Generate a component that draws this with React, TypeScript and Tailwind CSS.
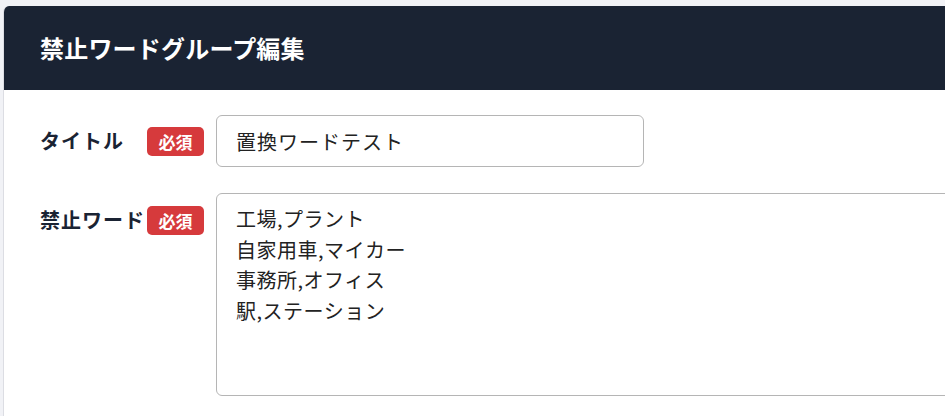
import React from "react";

const font = { fontFamily: '"Noto Sans CJK JP", "Noto Sans", sans-serif' };

function Badge() {
  return (
    <span className="flex h-[29px] w-[57px] shrink-0 items-center justify-center rounded-[5px] bg-[#d63a3c] text-[17px] font-bold leading-none text-white">
      必須
    </span>
  );
}

export default function App() {
  return (
    <div
      className="h-[416px] w-[945px] overflow-hidden bg-[#f1f2f6] pl-[3px] pt-[6px]"
      style={font}
    >
      <div className="h-[420px] w-[1000px] overflow-hidden rounded-tl-[6px] border-l border-[#dcdde3] bg-white">
        <div className="flex h-[84px] items-center bg-[#1a2333] pl-[36px]">
          <h1 className="text-[24px] font-bold leading-none tracking-[0.2px] text-white">
            禁止ワードグループ編集
          </h1>
        </div>
        <div className="flex flex-col gap-[26px] pl-[36px] pt-[25px]">
          <div className="flex items-center">
            <div className="flex w-[176px] items-center">
              <span className="w-[107px] text-[20px] font-bold tracking-[1px] text-[#1a2333]">
                タイトル
              </span>
              <Badge />
            </div>
            <input
              readOnly
              value="置換ワードテスト"
              className="h-[52px] w-[428px] rounded-[6px] border border-[#b5b5b5] px-[19px] text-[20px] tracking-[1px] text-[#222] outline-none"
              style={font}
            />
          </div>
          <div className="flex items-start">
            <div className="flex w-[176px] items-center pt-[12px]">
              <span className="w-[107px] text-[20px] font-bold tracking-[1px] text-[#1a2333]">
                禁止ワード
              </span>
              <Badge />
            </div>
            <textarea
              readOnly
              value={"工場,プラント\n自家用車,マイカー\n事務所,オフィス\n駅,ステーション"}
              className="h-[203px] w-[780px] resize-none rounded-[6px] border border-[#b5b5b5] px-[19px] py-[10px] text-[20px] leading-[30.5px] tracking-[0.5px] text-[#222] outline-none"
              style={font}
            />
          </div>
        </div>
      </div>
    </div>
  );
}
